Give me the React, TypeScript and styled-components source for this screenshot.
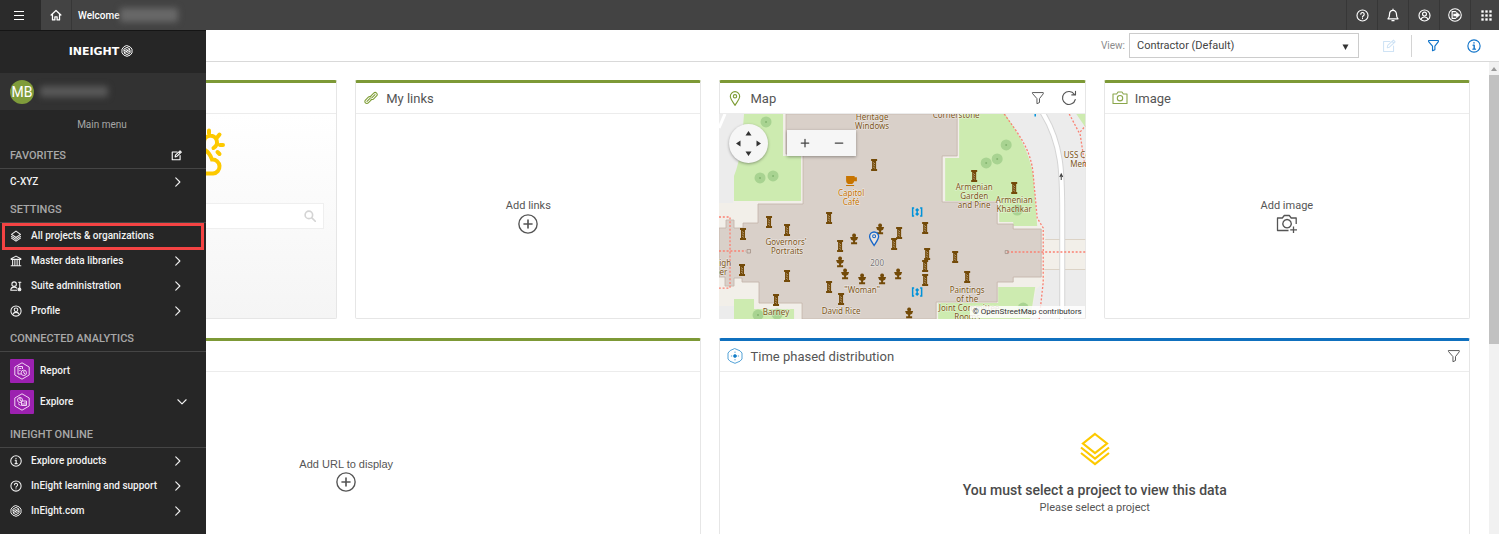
import React from "react";
import styled, { createGlobalStyle } from "styled-components";

const GlobalStyle = createGlobalStyle`
  *, *::before, *::after { box-sizing: border-box; }
  body { margin: 0; background: #fff; color: #4d4d4d; font-family: Roboto, "Liberation Sans", sans-serif; overflow: hidden; }
  button { margin: 0; padding: 0; border: 0; background: none; font: inherit; color: inherit; cursor: pointer; }
  a { color: inherit; text-decoration: none; }
  h1, h2, h3, p, ul { margin: 0; padding: 0; font-weight: inherit; list-style: none; }
  svg { display: block; flex: none; }
`;

/* ---------- icons ---------- */

type IconProps = { size?: number; color?: string; weight?: number; children?: React.ReactNode };

const Glyph = ({ size = 16, color = "currentColor", weight = 1.4, children }: IconProps) => (
  <svg width={size} height={size} viewBox="0 0 16 16" fill="none" stroke={color} strokeWidth={weight} strokeLinejoin="round" strokeLinecap="round" aria-hidden="true">
    {children}
  </svg>
);

const HomeIcon = () => (
  <Glyph size={12} weight={1.7}>
    <path d="M1.500 8 8 2l6.500 6M3.300 7v7.500h3.200v-4h3v4h3.200V7" />
  </Glyph>
);
const HelpIcon = (p: IconProps) => (
  <Glyph {...p}>
    <circle cx="8" cy="8" r="6.800" />
    <path d="M5.900 6.400a2.100 2.100 0 1 1 3.200 1.800c-.8.500-1.100.8-1.100 1.500M8 11.600v.2" />
  </Glyph>
);
const BellIcon = () => (
  <Glyph size={14}>
    <path d="M2.300 12.300h11.400c-1.300-1-1.700-2-1.700-4.800S10.500 2.800 8 2.800 4 4.700 4 7.500s-.4 3.800-1.700 4.800ZM8 1.200v1.500M6.800 14.500h2.400" />
  </Glyph>
);
const UserIcon = (p: IconProps) => (
  <Glyph {...p}>
    <circle cx="8" cy="8" r="6.800" />
    <circle cx="8" cy="6.300" r="2.400" />
    <path d="M3.800 12.600c.6-2 2.200-2.800 4.200-2.800s3.600.8 4.200 2.800" />
  </Glyph>
);
const LogoutIcon = () => (
  <Glyph size={14}>
    <circle cx="8" cy="8" r="7.200" strokeWidth="1.200" />
    <path d="M8.500 4.200H4.700v7.600h3.800" />
    <path d="M6.500 6.800h3V4.500L13.500 8l-4 3.500V9.200h-3Z" fill="currentColor" strokeWidth=".6" />
  </Glyph>
);
const AppsIcon = () => (
  <Glyph size={11}>
    {[0.5, 6.3, 12.1].map((y) => [0.5, 6.3, 12.1].map((x) => <rect key={`${x}-${y}`} x={x} y={y} width="3.400" height="3.400" fill="currentColor" stroke="none" />))}
  </Glyph>
);
const EditIcon = (p: IconProps) => (
  <Glyph {...p}>
    <path d="M9 2.800H1.800v11.400h11.400V8" />
    <path d="m6 10 .5-2.600 6.600-6.200 1.900 2-6.500 6.200ZM11.600 2.700l1.800 1.900" />
  </Glyph>
);
const FilterIcon = (p: IconProps) => (
  <Glyph {...p}>
    <path d="M2 1.800h12v1.400L9.700 8.700v4.500l-2.900 1.300V8.700L2 3.200Z" />
  </Glyph>
);
const InfoIcon = (p: IconProps) => (
  <Glyph {...p}>
    <circle cx="8" cy="8" r="7" />
    <path d="M7 7h1.200v4.500M6.800 11.600h2.800M8 4.300v.4" strokeWidth="1.600" />
  </Glyph>
);
const LayersIcon = (p: IconProps) => (
  <Glyph {...p}>
    <path d="M8 1.500 14 5.800 8 10 2 5.800Z" />
    <path d="m2 8.500 6 4 6-4" />
    <path d="m2 10.800 6 4 6-4" />
  </Glyph>
);
const LibraryIcon = () => (
  <Glyph size={12}>
    <path d="M1.500 5 8 1.500 14.500 5v.8h-13ZM3.500 6v7M6.500 6v7M9.500 6v7M12.500 6v7M1.500 14.300h13" />
  </Glyph>
);
const SuiteIcon = () => (
  <Glyph size={12}>
    <circle cx="5.500" cy="5.500" r="3" />
    <path d="M1 13.500c.2-3 2-4 4.500-4 1.500 0 3 .5 3.700 1.500M1 13.700h8M11.500 3h3M13 3v8" />
    <circle cx="12.600" cy="12.500" r="1.900" fill="currentColor" />
  </Glyph>
);
const HexMark = ({ size = 12 }: IconProps) => (
  <Glyph size={size} weight={1.3}>
    <path d="m8 .9 4.200 1.600 2.500 3v5l-2.500 3L8 15.100l-4.200-1.600-2.500-3v-5l2.500-3Z" />
    <path d="m4.200 8.500-.4-3L8 3.200l4.200 2.300L6.500 8.700l2 1.300 3.700-2M11.800 7.500l.4 3L8 12.800l-4.200-2.300L9.500 7.300l-2-1.300-3.300 1.800" />
  </Glyph>
);
const ChevronIcon = ({ down }: { down?: boolean }) => (
  <Glyph size={12} weight={1.5}>
    <path d={down ? "m2.500 5 5.500 5.500L13.500 5" : "M5 2.500 10.500 8 5 13.500"} />
  </Glyph>
);
const PlusCircle = () => (
  <Glyph size={20} weight={1.1}>
    <circle cx="8" cy="8" r="7.300" />
    <path d="M8 4.800v6.400M4.800 8h6.400" strokeWidth="1.300" />
  </Glyph>
);
const LinkIcon = () => (
  <Glyph size={14} color="#7d9c33" weight={1.2}>
    <g transform="rotate(-45 8 8)">
      <path d="M7.500 9.800H1.800a2.300 2.300 0 0 1-2.300-2.300v0a2.300 2.300 0 0 1 2.300-2.300h4.700a2.300 2.300 0 0 1 2.300 2.300M2 7.500h4.500" />
      <path d="M8.500 6.200h5.700a2.300 2.300 0 0 1 2.300 2.300v0a2.300 2.300 0 0 1-2.300 2.300H9.500a2.300 2.300 0 0 1-2.300-2.300M14 8.500H9.500" />
    </g>
  </Glyph>
);
const PinIcon = ({ size = 15, color = "#7d9c33", weight = 1.2 }: IconProps) => (
  <Glyph size={size} color={color} weight={weight}>
    <path d="M8 15.300C5.500 11.500 3 8.500 3 5.700a5 5 0 0 1 10 0c0 2.800-2.500 5.800-5 9.600Z" />
    <circle cx="8" cy="5.600" r="1.800" />
  </Glyph>
);
const RefreshIcon = () => (
  <Glyph size={16} weight={1.1}>
    <path d="M14.300 9.500A6.500 6.500 0 1 1 13.300 4.200M14.500 1.200v3.700h-3.700" />
  </Glyph>
);
const CameraIcon = () => (
  <svg width="16" height="14" viewBox="0 0 16 14" fill="none" stroke="#8aa64a" strokeWidth="1.100" strokeLinejoin="round" aria-hidden="true">
    <path d="M1 3h3.700L6 1h4l1.300 2H15v9.500H1Z" />
    <circle cx="8" cy="7.200" r="2.700" />
  </svg>
);
const CameraPlusIcon = () => (
  <svg width="22" height="20" viewBox="0 0 22 20" fill="none" stroke="#555" strokeWidth="1.300" strokeLinejoin="round" aria-hidden="true">
    <path d="M12.500 16.500H1.500V4h4.800l2-2.500h5L15.200 4h5v6M11 5.500a4.200 4.200 0 1 0 .1 0ZM17.500 12.500V19M14.200 15.800H21" />
  </svg>
);
const PhaseIcon = () => (
  <Glyph size={16} color="#3f97d3" weight={0.9}>
    <path d="M8 .7 13 2.800 15 5v6l-2 2.200-5 2.100-5-2.100L1 11V5l2-2.200Z" />
    <circle cx="8" cy="8" r="1.500" fill="#0070c4" />
    <path d="M8 4v.5M8 11.500v.5M4.300 8h.5M11.200 8h.5" />
  </Glyph>
);
const StackIcon = () => (
  <svg width="30" height="34" viewBox="0 0 30 34" fill="none" stroke="#fdc900" strokeWidth="2.200" aria-hidden="true">
    <path d="M15 2 27 11.500 15 21 3 11.500Z" />
    <path d="m1 15.500 14 11 14-11M1 21l14 11 14-11" />
  </svg>
);
const WeatherIcon = () => (
  <svg width="56" height="50" viewBox="0 0 56 50" fill="none" stroke="#fdc900" strokeWidth="4" strokeLinecap="round" aria-hidden="true">
    <path d="M39 3.500v3M49.500 7.500l-2 2.500M50 18h3M47.500 25l2 2M28.500 7l2 2.500M34 15a6.500 6.500 0 1 1 9.500 6" />
    <path d="M12 46.500a9 9 0 0 1 0-18c1-6 6-9 11-9 7-.5 16 3.500 19 13a7 7 0 1 1 1 14Z" />
  </svg>
);
const TileIcon = ({ chart }: { chart?: boolean }) => (
  <svg width="18" height="18" viewBox="0 0 18 18" fill="none" stroke="#f0d5f3" strokeWidth="1" strokeLinejoin="round" aria-hidden="true">
    <path d="M9 .8 16.200 5v8L9 17.200 1.800 13V5Z" />
    {chart ? (
      <>
        <circle cx="7" cy="7" r="2.500" />
        <path d="M7 4.500V7l2 1.500M8.500 8h5v4.500h-5ZM10 12V10M12 12V9M5 10.500l2.500 2" />
      </>
    ) : (
      <>
        <path d="M8 12H5V4.500h4.500V7M6.300 6.500h2M6.300 8.500h1.200" />
        <circle cx="10.800" cy="10.800" r="2.700" />
        <path d="M10.800 9v2l1.500 1" />
      </>
    )}
  </svg>
);

/* ---------- frame ---------- */

const Page = styled.div`
  display: flex;
  flex-direction: column;
  height: 100vh;
  overflow: hidden;
`;
const TopBar = styled.header`
  display: flex;
  flex: none;
  height: 30px;
  background: #434343;
  color: #fff;
`;
const BarButton = styled.button<{ $dark?: boolean; $wide?: boolean; $side?: "left" | "right" }>`
  display: flex;
  align-items: center;
  justify-content: center;
  width: ${(p) => (p.$wide ? 41 : 31)}px;
  background: ${(p) => (p.$dark ? "#2b2b2b" : "transparent")};
  border-left: ${(p) => (p.$side === "left" ? "1px solid #373737" : "0")};
  border-right: ${(p) => (p.$side === "right" ? "1px solid #373737" : "0")};
`;
const Burger = styled.span`
  display: flex;
  align-items: center;
  width: 10px;
  height: 9px;
  margin-right: 3px;
  border-top: 1px solid #fff;
  border-bottom: 1px solid #fff;
  &::before { content: ""; width: 100%; height: 1px; background: #fff; }
`;
const Welcome = styled.p`
  display: flex;
  align-items: center;
  padding-left: 6px;
  font-size: 10px;
  font-weight: 500;
`;
const Redacted = styled.span<{ $w: number; $tone: string; $h?: number }>`
  width: ${(p) => p.$w}px;
  height: ${(p) => p.$h ?? 11}px;
  border-radius: 2px;
  background: ${(p) => p.$tone};
  filter: blur(3px);
`;
const BarActions = styled.nav`
  display: flex;
  margin: 0 -2px 0 auto;
`;
const Stage = styled.div`
  position: relative;
  display: flex;
  flex: 1;
  min-height: 0;
`;

/* ---------- side menu ---------- */

const SideMenu = styled.nav`
  position: absolute;
  inset: 0 auto 0 0;
  z-index: 2;
  width: 206px;
  background: #262626;
  color: #f2f2f2;
`;
const Brand = styled.div`
  display: flex;
  align-items: center;
  justify-content: center;
  gap: 2px;
  height: 43px;
  padding: 0 4px 2px 0;
  border-top: 1px solid #151515;
  font: bold 11px "DejaVu Sans", sans-serif;
  color: #fff;
`;
const Account = styled.div`
  display: flex;
  align-items: center;
  gap: 6px;
  height: 37px;
  padding-left: 10px;
  background: #323232;
`;
const Avatar = styled.span`
  display: flex;
  align-items: center;
  justify-content: center;
  width: 24px;
  height: 24px;
  border-radius: 50%;
  background: #7f9c3b;
  color: #fff;
  font-size: 14px;
`;
const MenuCaption = styled.p`
  height: 30px;
  line-height: 30px;
  padding-right: 2px;
  text-align: center;
  font-size: 10px;
  color: #a6a6a6;
`;
const SectionTitle = styled.h2`
  display: flex;
  align-items: center;
  justify-content: space-between;
  height: 29px;
  padding: 2px 24px 0 10px;
  border-bottom: 1px solid #454545;
  font-size: 11px;
  font-weight: 500;
  color: #a8a8a8;
  svg { color: #fff; }
`;
const MenuLink = styled.a<{ $marked?: boolean }>`
  position: relative;
  display: flex;
  align-items: center;
  gap: 9px;
  height: 25px;
  padding: 0 22px 0 10px;
  font-size: 10px;
  font-weight: 500;
  white-space: nowrap;
  > span { flex: 1; }
  ${(p) =>
    p.$marked &&
    `&::after { content: ""; position: absolute; inset: 0 2px -2px 2px; border: 3px solid #f44343; }`}
`;
const TileGroup = styled.ul`
  padding: 3px 0 2px;
`;
const TileLink = styled.a`
  display: flex;
  align-items: center;
  gap: 6px;
  height: 31px;
  padding: 0 18px 0 10px;
  font-size: 10px;
  font-weight: 500;
  > span:nth-child(2) { flex: 1; }
`;
const Tile = styled.span`
  display: flex;
  align-items: center;
  justify-content: center;
  width: 24px;
  height: 24px;
  border-radius: 1px;
  background: #9c21b0;
`;

type Entry = { label: string; icon?: React.ReactNode; plain?: boolean; marked?: boolean };

const MenuList = ({ entries }: { entries: Entry[] }) => (
  <ul>
    {entries.map((e) => (
      <li key={e.label}>
        <MenuLink href="#" $marked={e.marked}>
          {e.icon}
          <span>{e.label}</span>
          {!e.plain && <ChevronIcon />}
        </MenuLink>
      </li>
    ))}
  </ul>
);

const settings: Entry[] = [
  { label: "All projects & organizations", icon: <LayersIcon size={12} />, plain: true, marked: true },
  { label: "Master data libraries", icon: <LibraryIcon /> },
  { label: "Suite administration", icon: <SuiteIcon /> },
  { label: "Profile", icon: <UserIcon size={12} /> },
];
const online: Entry[] = [
  { label: "Explore products", icon: <InfoIcon size={12} /> },
  { label: "InEight learning and support", icon: <HelpIcon size={12} /> },
  { label: "InEight.com", icon: <HexMark /> },
];

/* ---------- workspace ---------- */

const Workspace = styled.main`
  display: flex;
  flex-direction: column;
  flex: 1;
  min-width: 0;
`;
const Toolbar = styled.div`
  display: flex;
  align-items: center;
  justify-content: flex-end;
  flex: none;
  height: 32px;
  padding-right: 16px;
  border-bottom: 1px solid #d9d9d9;
`;
const ViewLabel = styled.label`
  font-size: 10px;
  color: #8c8c8c;
  margin-right: 4px;
`;
const SelectWrap = styled.span`
  position: relative;
  display: flex;
  width: 230px;
  margin-right: 21px;
  svg { position: absolute; right: 10px; top: 11px; pointer-events: none; }
`;
const Select = styled.select`
  appearance: none;
  width: 100%;
  height: 25px;
  padding: 0 24px 0 7px;
  border: 1px solid #ccc;
  border-radius: 0;
  background: #fff;
  color: #444;
  font: 11px Roboto, sans-serif;
`;
const ToolButton = styled.button<{ $tone: string }>`
  display: flex;
  align-items: center;
  justify-content: center;
  width: 18px;
  height: 24px;
  color: ${(p) => p.$tone};
`;
const ToolDivider = styled.span`
  width: 1px;
  height: 22px;
  margin: 0 12px 0 13px;
  background: #d4d4d4;
`;
const InfoSlot = styled.span`
  display: flex;
  margin-left: 23px;
`;
const Scroller = styled.div`
  display: flex;
  flex: 1;
  min-height: 0;
`;
const Board = styled.div`
  display: grid;
  flex: 1;
  min-width: 0;
  grid-template-columns: 346fr 346fr 366fr 366fr;
  grid-auto-rows: 239px;
  gap: 19px 18px;
  margin-left: -9px;
  padding: 18px 19px 0 0;
  overflow: hidden;
`;
const ScrollTrack = styled.div`
  display: flex;
  flex-direction: column;
  width: 10px;
  background: #f1f1f1;
`;
const ScrollArrow = styled.span`
  display: flex;
  align-items: center;
  justify-content: center;
  height: 13px;
`;
const ScrollThumb = styled.span`
  height: 57%;
  background: #c1c1c1;
`;

const Card = styled.section<{ $accent?: string; $span?: number }>`
  display: flex;
  flex-direction: column;
  min-width: 0;
  grid-column: span ${(p) => p.$span ?? 1};
  border: 1px solid #e6e6e6;
  border-top: 3px solid ${(p) => p.$accent ?? "#7d9936"};
  border-radius: 2px;
  background: #fff;
`;
const CardHead = styled.header`
  display: flex;
  align-items: center;
  gap: 7px;
  flex: none;
  height: 31px;
  padding: 0 8px 0 7px;
  border-bottom: 1px solid #ececec;
  color: #555;
  > svg:first-child { width: 16px; }
`;
const CardTitle = styled.h3`
  flex: 1;
  font-size: 13px;
`;
const HeadActions = styled.span`
  display: flex;
  align-items: center;
  gap: 16px;
  button { display: flex; }
`;
const CardBody = styled.div`
  display: flex;
  flex-direction: column;
  align-items: center;
  justify-content: center;
  flex: 1;
  min-height: 0;
`;
const AddButton = styled.button`
  display: flex;
  flex-direction: column;
  align-items: center;
  font-size: 11px;
  line-height: 16px;
  color: #555;
`;
const UrlButton = styled(AddButton)`
  font-family: "Liberation Sans", Arial, sans-serif;
`;
const WeatherBody = styled(CardBody)`
  align-items: flex-end;
  justify-content: flex-start;
  padding: 13px 12px 0;
  background: linear-gradient(#fff, #f5f5f5);
  > svg { margin-right: 98px; }
`;
const SearchBox = styled.form`
  display: flex;
  align-items: center;
  width: 100%;
  height: 26px;
  margin-top: 26px;
  padding-right: 7px;
  border: 1px solid #efefef;
  background: #fff;
  color: #d4d4d4;
  input { flex: 1; min-width: 0; border: 0; outline: 0; background: none; }
`;
const EmptyTitle = styled.p`
  margin-top: 14px;
  font-size: 14px;
  line-height: 20px;
  font-weight: 500;
  color: #4a4a4a;
`;
const EmptyNote = styled.p`
  font-size: 11px;
  line-height: 16px;
  color: #555;
`;

/* ---------- map ---------- */

const MapBody = styled.div`
  position: relative;
  flex: 1;
  min-height: 0;
  margin: 0 -1px -1px;
  overflow: hidden;
  > svg { width: 100%; height: 100%; }
`;
const PanPad = styled.div`
  position: absolute;
  left: 10px;
  top: 10px;
  display: grid;
  place-items: center;
  width: 39px;
  height: 39px;
  border-radius: 50%;
  background: #f6f6f6;
  box-shadow: 0 1px 3px rgba(0, 0, 0, 0.35);
`;
const ZoomPad = styled.div`
  position: absolute;
  left: 68px;
  top: 16px;
  display: flex;
  width: 69px;
  height: 26px;
  background: #f6f6f6;
  box-shadow: 0 1px 3px rgba(0, 0, 0, 0.35);
  color: #444;
  button { flex: 1; display: grid; place-items: center; }
`;
const Credit = styled.p`
  position: absolute;
  right: 1px;
  bottom: 1px;
  padding: 0 3px;
  background: rgba(255, 255, 255, 0.85);
  font-size: 8px;
  line-height: 12px;
  color: #333;
`;

const columns = [
  [155, 51], [50, 108], [68, 116], [24, 120], [110, 104], [121, 132], [180, 119], [175, 130], [23, 156], [68, 162],
  [57, 186], [110, 173], [122, 185], [206, 114], [208, 140], [206, 152], [206, 166], [236, 143], [248, 163], [255, 62], [295, 74],
];
const busts = [[135, 125], [161, 115], [121, 148], [126, 160], [143, 165], [163, 165], [179, 160], [190, 199]];
const trees = [[47, 8], [41, 64], [54, 62], [287, 31], [278, 45], [267, 49], [39, 201], [58, 200], [298, 96], [304, 194]];
const lifts = [[198, 98], [198, 178]];
const places: [string, number, number][] = [
  ["Heritage", 153, 6], ["Windows", 153, 15], ["Cornerstone", 237, 4], ["Armenian", 255, 76], ["Garden", 255, 85],
  ["and Pine", 255, 94], ["Armenian", 295, 89], ["Khachkar", 295, 98], ["Governors'", 67, 131], ["Portraits", 68, 140],
  ["eigh", 4, 152], ["ber", 2, 161], ["Barney", 57, 201], ["\"Woman\"", 143, 179], ["David Rice", 122, 200],
  ["Paintings", 248, 179], ["of the", 248, 188], ["Joint Committee", 250, 197], ["Rooms", 248, 206], ["USS Cole", 361, 44], ["Memorial", 369, 53],
];

const SiteMap = () => (
  <svg viewBox="0 0 366 205" preserveAspectRatio="xMidYMid slice" role="img" aria-label="Map">
    <rect width="366" height="205" fill="#f2efe9" />
    <path d="M0 0H25C24 30 19 60 14 89H0ZM0 192H15V205H0Z" fill="#ececec" />
    <path d="M0 14 6 0" stroke="#fff" strokeWidth="3" />
    <path d="M285 0C300 20 314 45 318 104L325 116 327 125H366V0ZM366 156H326V168L317 175 311 205H366Z" fill="#ececec" />
    <path d="M326 125.500H366M325 155.500H366" stroke="#dcd3c6" />
    <path d="M357 0H366V13Z" fill="#cdebb0" />
    <path
      d="M25 0H64V42H82V87H15V62C22 45 23 25 25 0ZM15 185H35V195H75V205H15ZM240 0H286C299 20 309 35 314 61L318 112H294V108H280V87H226V44H240ZM279 173H316L311 205H219V189H279Z"
      fill="#cdebb0"
    />
    <path
      d="M67 0V40H84V90H39V109H24V114H15V106H7V114H0V163H6V172H15V164H23V168H40V189H83V205H217V188H278V168H294V163H322V115H294V110H278V88H223V42H238V0Z"
      fill="#d9d0c9"
      stroke="#c3b3a8"
      strokeWidth=".8"
    />
    <g fill="none">
      <path d="M323-2C343 30 343 60 343 100V205" stroke="#d5d5d5" strokeWidth="6" />
      <path d="M323-2C343 30 343 60 343 100V205" stroke="#fff" strokeWidth="4" />
      <g stroke="#fa8072" strokeWidth="1.300" strokeDasharray="2 1.800">
        <path d="M285 0C299 20 312 35 314 61L318 104 324 114V168L320 205M350 0 361 21 366 54M361 18 366 12M288 138H366M0 103H11V174H0M0 137H27" />
      </g>
      <path d="M286 136.500h3v3h-3ZM28 135.500h3.500v3.500H28Z" stroke="#a39187" strokeWidth=".8" />
      <path d="M342 66v-5m-1.500 2 1.500-3 1.500 3" stroke="#444" />
    </g>
    {trees.map(([x, y]) => (
      <g key={`t${x}`}>
        <circle cx={x} cy={y} r="5.500" fill="#a8d391" />
        <circle cx={x} cy={y} r="1" fill="#84b570" />
      </g>
    ))}
    {columns.map(([x, y]) => (
      <g key={`c${x}-${y}`}>
        <path d={`M${x - 3} ${y - 6}h6v2h-1v8h1v2h-6v-2h1v-8h-1Z`} fill="#734a08" />
        <path d={`M${x - 1} ${y - 2.5}l2 1.500M${x - 1} ${y - 0.3}l2 1.500M${x - 1} ${y + 2}l2 1.500`} stroke="#cbb99d" strokeWidth=".7" />
      </g>
    ))}
    <g fill="#734a08">
      {busts.map(([x, y]) => (
        <path key={`b${x}-${y}`} d={`M${x} ${y - 5.5}a2 2 0 0 1 1.300 3.500h2.700l-1 2.700-2 1v1.500h2v2h-6v-2h2v-1.500l-2-1-1-2.700h2.700a2 2 0 0 1 1.300-3.500Z`} />
      ))}
    </g>
    {lifts.map(([x, y]) => (
      <path key={`l${y}`} d={`M${x - 3} ${y - 4}h-1.500v8h1.500M${x + 3} ${y - 4}h1.500v8h-1.500M${x} ${y - 3}v6M${x - 1.5} ${y - 1.5}l1.500-1.500 1.500 1.500M${x - 1.5} ${y + 1.5}l1.500 1.500 1.500-1.500`} fill="none" stroke="#0092da" strokeWidth="1.500" />
    ))}
    <path d="M316 0v2.500" stroke="#0092da" strokeWidth="1.500" />
    <path d="M127 62h8.500v1.200h2.300v4h-2.800c-.3 1.500-1 2.300-2 2.800h-4c-1.500-.7-2-2-2-4ZM127 71h8v1h-8Z" fill="#c77400" />
    <g fontFamily="'Noto Sans', sans-serif" fontSize="8" textAnchor="middle" fill="#7d561a" stroke="#fff" strokeOpacity=".5" strokeWidth="1.200" paintOrder="stroke">
      {places.map(([text, x, y]) => (
        <text key={`${text}${x}`} x={x} y={y}>{text}</text>
      ))}
      <g fill="#c77400">
        <text x="132" y="82">Capitol</text>
        <text x="132" y="91">Café</text>
      </g>
      <text x="158" y="152" fill="#777">200</text>
    </g>
    <path d="M155 131.500c-2.500-4-4.500-6.500-4.500-9a4.500 4.500 0 0 1 9 0c0 2.500-2 5-4.500 9Z" fill="#e9e3df" stroke="#1565c8" strokeWidth="1.300" />
    <circle cx="155" cy="122.300" r="1.500" fill="none" stroke="#1565c8" />
  </svg>
);

export default function App() {
  return (
    <Page>
      <GlobalStyle />
      <TopBar>
        <BarButton $dark $wide aria-label="Menu"><Burger /></BarButton>
        <BarButton $side="right" aria-label="Home"><HomeIcon /></BarButton>
        <Welcome>
          Welcome
          <Redacted $w={58} $h={14} $tone="#686868" />
        </Welcome>
        <BarActions>
          <BarButton $side="left" aria-label="Help"><HelpIcon size={13} /></BarButton>
          <BarButton $side="left" aria-label="Notifications"><BellIcon /></BarButton>
          <BarButton $side="left" aria-label="Profile"><UserIcon size={13} /></BarButton>
          <BarButton $side="left" aria-label="Sign out"><LogoutIcon /></BarButton>
          <BarButton $side="left" aria-label="Applications"><AppsIcon /></BarButton>
        </BarActions>
      </TopBar>
      <Stage>
        <SideMenu>
          <Brand>INEIGHT<HexMark size={12} /></Brand>
          <Account>
            <Avatar>MB</Avatar>
            <Redacted $w={68} $tone="#585858" />
          </Account>
          <MenuCaption>Main menu</MenuCaption>
          <SectionTitle>FAVORITES<EditIcon size={11} weight={1.6} /></SectionTitle>
          <MenuList entries={[{ label: "C-XYZ" }]} />
          <SectionTitle>SETTINGS</SectionTitle>
          <MenuList entries={settings} />
          <SectionTitle>CONNECTED ANALYTICS</SectionTitle>
          <TileGroup>
            <li><TileLink href="#"><Tile><TileIcon /></Tile><span>Report</span></TileLink></li>
            <li><TileLink href="#"><Tile><TileIcon chart /></Tile><span>Explore</span><ChevronIcon down /></TileLink></li>
          </TileGroup>
          <SectionTitle>INEIGHT ONLINE</SectionTitle>
          <MenuList entries={online} />
        </SideMenu>
        <Workspace>
          <Toolbar>
            <ViewLabel htmlFor="view">View:</ViewLabel>
            <SelectWrap>
              <Select id="view" defaultValue="c"><option value="c">Contractor (Default)</option></Select>
              <svg width="7" height="6" viewBox="0 0 7 6"><path d="M.5.500h6L3.500 6Z" fill="#333" /></svg>
            </SelectWrap>
            <ToolButton $tone="#cfe3f5" disabled aria-label="Edit view"><EditIcon size={14} weight={1.2} /></ToolButton>
            <ToolDivider />
            <ToolButton $tone="#0f73c9" aria-label="Filter"><FilterIcon size={13} weight={1.4} /></ToolButton>
            <InfoSlot>
              <ToolButton $tone="#0f73c9" aria-label="Information"><InfoIcon size={14} weight={1.3} /></ToolButton>
            </InfoSlot>
          </Toolbar>
          <Scroller>
            <Board>
              <Card>
                <CardHead />
                <WeatherBody>
                  <WeatherIcon />
                  <SearchBox>
                    <input aria-label="Search location" />
                    <Glyph size={12} weight={2.2}><circle cx="6.500" cy="6.500" r="5" /><path d="m10.500 10.500 4.500 4.500" /></Glyph>
                  </SearchBox>
                </WeatherBody>
              </Card>
              <Card>
                <CardHead><LinkIcon /><CardTitle>My links</CardTitle></CardHead>
                <CardBody><AddButton>Add links<PlusCircle /></AddButton></CardBody>
              </Card>
              <Card>
                <CardHead>
                  <PinIcon />
                  <CardTitle>Map</CardTitle>
                  <HeadActions>
                    <button aria-label="Filter map"><FilterIcon size={14} weight={1.1} /></button>
                    <button aria-label="Refresh map"><RefreshIcon /></button>
                  </HeadActions>
                </CardHead>
                <MapBody>
                  <SiteMap />
                  <PanPad>
                    <svg width="27" height="27" viewBox="0 0 27 27" fill="#333"><path d="M13.500 1l3 4.500h-6ZM13.500 26l3-4.500h-6ZM1 13.500l4.500-3v6ZM26 13.500l-4.500-3v6Z" /></svg>
                  </PanPad>
                  <ZoomPad>
                    <button aria-label="Zoom in"><Glyph size={10} weight={2}><path d="M8 2v12M2 8h12" /></Glyph></button>
                    <button aria-label="Zoom out"><Glyph size={10} weight={2}><path d="M2 8h12" /></Glyph></button>
                  </ZoomPad>
                  <Credit>© OpenStreetMap contributors</Credit>
                </MapBody>
              </Card>
              <Card>
                <CardHead><CameraIcon /><CardTitle>Image</CardTitle></CardHead>
                <CardBody><AddButton>Add image<CameraPlusIcon /></AddButton></CardBody>
              </Card>
              <Card $span={2}>
                <CardHead />
                <CardBody><UrlButton>Add URL to display<PlusCircle /></UrlButton></CardBody>
              </Card>
              <Card $accent="#0f70be" $span={2}>
                <CardHead>
                  <PhaseIcon />
                  <CardTitle>Time phased distribution</CardTitle>
                  <HeadActions><button aria-label="Filter chart"><FilterIcon size={14} weight={1.1} /></button></HeadActions>
                </CardHead>
                <CardBody>
                  <StackIcon />
                  <EmptyTitle>You must select a project to view this data</EmptyTitle>
                  <EmptyNote>Please select a project</EmptyNote>
                </CardBody>
              </Card>
            </Board>
            <ScrollTrack>
              <ScrollArrow><svg width="6" height="4" viewBox="0 0 6 4"><path d="M0 4 3 0l3 4Z" fill="#999" /></svg></ScrollArrow>
              <ScrollThumb />
            </ScrollTrack>
          </Scroller>
        </Workspace>
      </Stage>
    </Page>
  );
}
